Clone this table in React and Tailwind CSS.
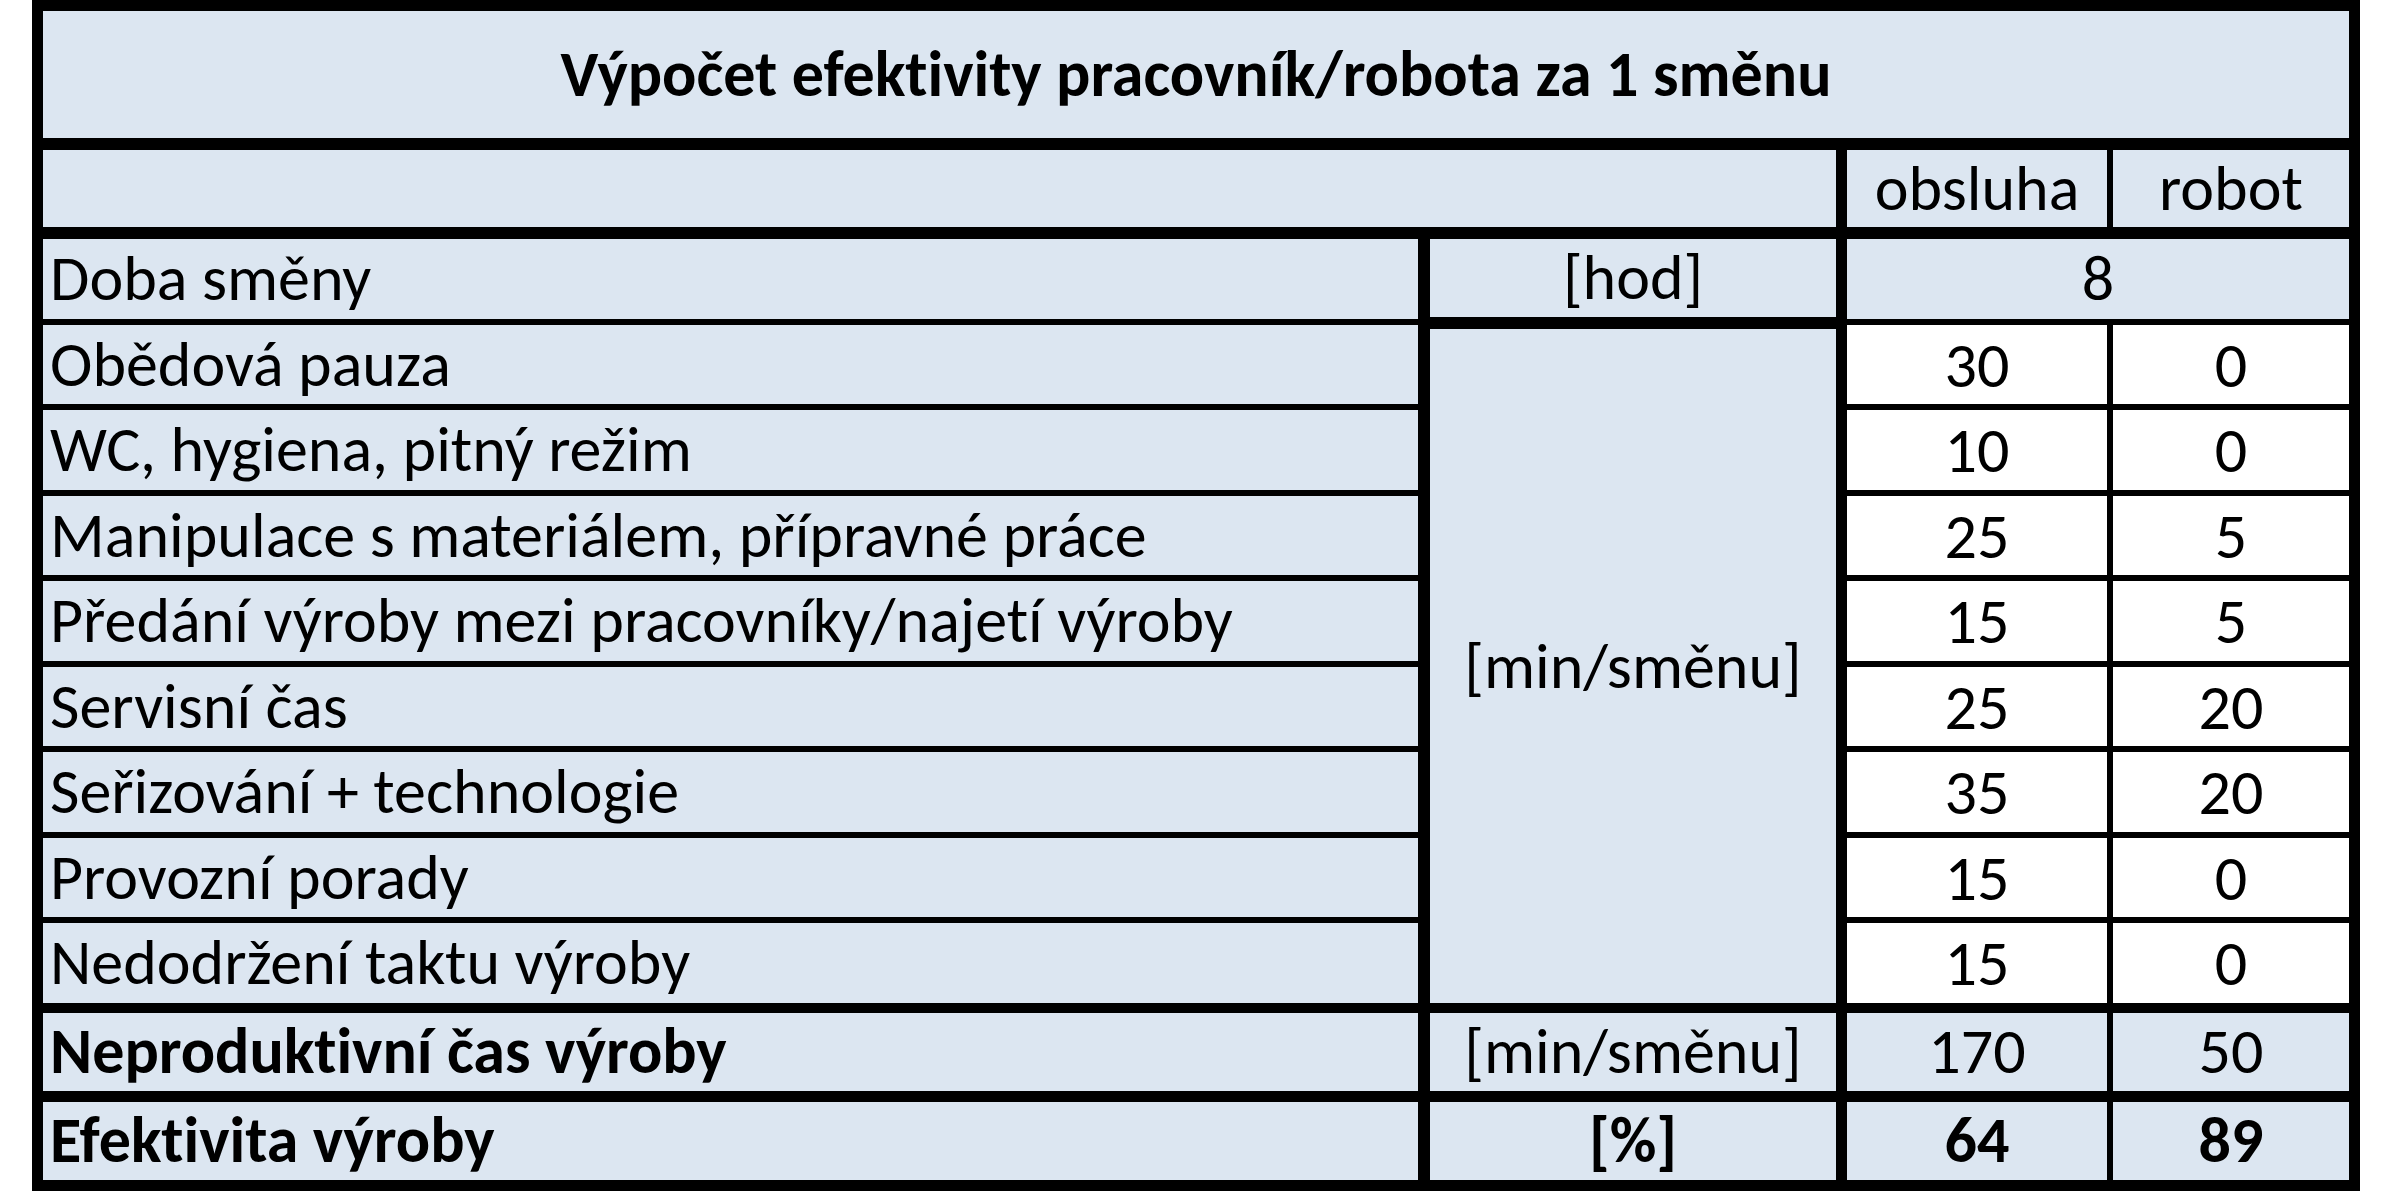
import React from "react";

const rows = [
  ["Obědová pauza", "30", "0"],
  ["WC, hygiena, pitný režim", "10", "0"],
  ["Manipulace s materiálem, přípravné práce", "25", "5"],
  ["Předání výroby mezi pracovníky/najetí výroby", "15", "5"],
  ["Servisní čas", "25", "20"],
  ["Seřizování + technologie", "35", "20"],
  ["Provozní porady", "15", "0"],
  ["Nedodržení taktu výroby", "15", "0"],
];

const font = { fontFamily: '"Carlito", Lato, "Open Sans", sans-serif' };

function Cell({ r, c, rs = 1, cs = 1, className = "", children }) {
  return (
    <div
      className={`flex items-center whitespace-nowrap ${className}`}
      style={{ gridRow: `${r} / span ${rs}`, gridColumn: `${c} / span ${cs}` }}
    >
      {children}
    </div>
  );
}

export default function App() {
  return (
    <div className="w-[2383px] h-[1197px] bg-white pl-[32px] [font-variant-ligatures:none]" style={font}>
      <div
        className="grid bg-black text-black text-[64px] leading-none w-[2328px] grid-cols-[11px_1375px_12px_406px_11px_260px_6px_236px_11px] grid-rows-[11px_127px_12px_77px_12px_80px_6px_79px_6px_80px_6px_79px_6px_80px_6px_79px_6px_80px_6px_79px_6px_80px_10px_78px_11px_78px_11px]"
      >
        <Cell r={2} c={2} cs={7} className="bg-[#dce6f1] justify-center font-bold pb-[2px]">
          Výpočet efektivity pracovník/robota za 1 směnu
        </Cell>

        <Cell r={4} c={2} cs={3} className="bg-[#dce6f1]" />
        <Cell r={4} c={6} className="bg-[#dce6f1] justify-center pb-[2px]">obsluha</Cell>
        <Cell r={4} c={8} className="bg-[#dce6f1] justify-center pb-[2px]">robot</Cell>

        <Cell r={6} c={2} className="bg-[#dce6f1] pl-[7px] pb-[2px]">Doba směny</Cell>
        <Cell r={6} c={4} className="bg-[#dce6f1] justify-center border-b-[2px] border-black pb-[2px]">[hod]</Cell>
        <Cell r={6} c={6} cs={3} className="bg-[#dce6f1] justify-center pb-[2px]">8</Cell>

        {rows.map(([label, a, b], i) => (
          <React.Fragment key={label}>
            <Cell r={8 + 2 * i} c={2} className="bg-[#dce6f1] pl-[7px] pb-[2px]">{label}</Cell>
            <Cell r={8 + 2 * i} c={6} className="bg-white justify-center">{a}</Cell>
            <Cell r={8 + 2 * i} c={8} className="bg-white justify-center">{b}</Cell>
          </React.Fragment>
        ))}
        <Cell r={8} c={4} rs={15} className="bg-[#dce6f1] justify-center border-t-[4px] border-black">
          [min/směnu]
        </Cell>

        <Cell r={24} c={2} className="bg-[#dce6f1] pl-[7px] font-bold pb-[2px]">Neproduktivní čas výroby</Cell>
        <Cell r={24} c={4} className="bg-[#dce6f1] justify-center pb-[2px]">[min/směnu]</Cell>
        <Cell r={24} c={6} className="bg-[#dce6f1] justify-center pb-[2px]">170</Cell>
        <Cell r={24} c={8} className="bg-[#dce6f1] justify-center pb-[2px]">50</Cell>

        <Cell r={26} c={2} className="bg-[#dce6f1] pl-[7px] font-bold pb-[2px]">Efektivita výroby</Cell>
        <Cell r={26} c={4} className="bg-[#dce6f1] justify-center font-bold pb-[2px]">[%]</Cell>
        <Cell r={26} c={6} className="bg-[#dce6f1] justify-center font-bold pb-[2px]">64</Cell>
        <Cell r={26} c={8} className="bg-[#dce6f1] justify-center font-bold pb-[2px]">89</Cell>
      </div>
    </div>
  );
}
